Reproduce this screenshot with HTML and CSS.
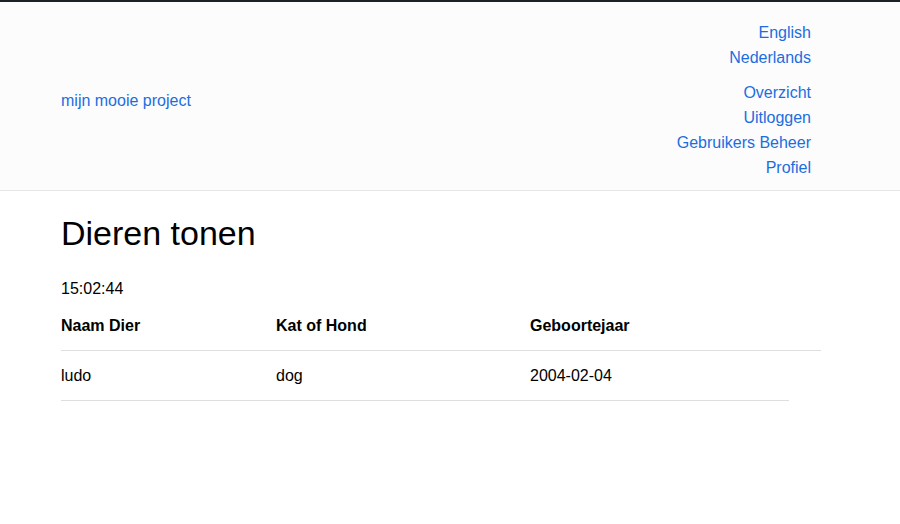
FILE: index.html
```html
<!DOCTYPE html>
<html lang="nl">
<head>
<meta charset="utf-8">
<title>Dieren tonen</title>
<link rel="stylesheet" href="styles.css">
</head>
<body>
<header class="site-header">
  <a class="brand" href="#">mijn mooie project</a>
  <nav class="nav">
    <ul class="nav-list">
      <li><a href="#">English</a></li>
      <li><a href="#">Nederlands</a></li>
    </ul>
    <ul class="nav-list nav-main">
      <li><a href="#">Overzicht</a></li>
      <li><a href="#">Uitloggen</a></li>
      <li><a href="#">Gebruikers Beheer</a></li>
      <li><a href="#">Profiel</a></li>
    </ul>
  </nav>
</header>
<main class="content">
  <h1 class="title">Dieren tonen</h1>
  <p class="clock">15:02:44</p>
  <div class="table">
    <div class="row head">
      <div class="cell">Naam Dier</div>
      <div class="cell">Kat of Hond</div>
      <div class="cell">Geboortejaar</div>
    </div>
    <div class="row body">
      <div class="cell">ludo</div>
      <div class="cell">dog</div>
      <div class="cell">2004-02-04</div>
    </div>
  </div>
</main>
</body>
</html>
```
FILE: styles.css
```css
html, body {
  margin: 0;
  padding: 0;
  background: #ffffff;
  font-family: "Liberation Sans", Arial, sans-serif;
  font-size: 16px;
  color: #000000;
}

body {
  border-top: 2px solid #1d2125;
}

a {
  color: #1b6ee0;
  text-decoration: none;
}

.site-header {
  display: flex;
  justify-content: space-between;
  align-items: center;
  background: #fcfcfc;
  border-bottom: 1px solid #e6e6e6;
  padding: 18px 89px 10px 61px;
}

.brand {
  line-height: 25px;
}

.nav {
  display: flex;
  flex-direction: column;
  align-items: flex-end;
}

.nav-list {
  list-style: none;
  margin: 0;
  padding: 0;
  text-align: right;
  line-height: 25px;
}

.nav-main {
  margin-top: 10px;
}

.content {
  padding: 21px 0 0 61px;
}

.title {
  margin: 0;
  font-size: 34px;
  font-weight: normal;
  line-height: 43px;
}

.clock {
  margin: 24px 0 0 0;
  line-height: 19px;
}

.table {
  margin-top: 8px;
}

.row {
  display: grid;
  grid-template-columns: 215px 254px 1fr;
  line-height: 19px;
}

.row.head {
  width: 760px;
  font-weight: bold;
  padding: 10px 0 15px 0;
  border-bottom: 1px solid #dedede;
}

.row.body {
  width: 728px;
  padding: 15px 0 15px 0;
  border-bottom: 1px solid #dedede;
}
```
